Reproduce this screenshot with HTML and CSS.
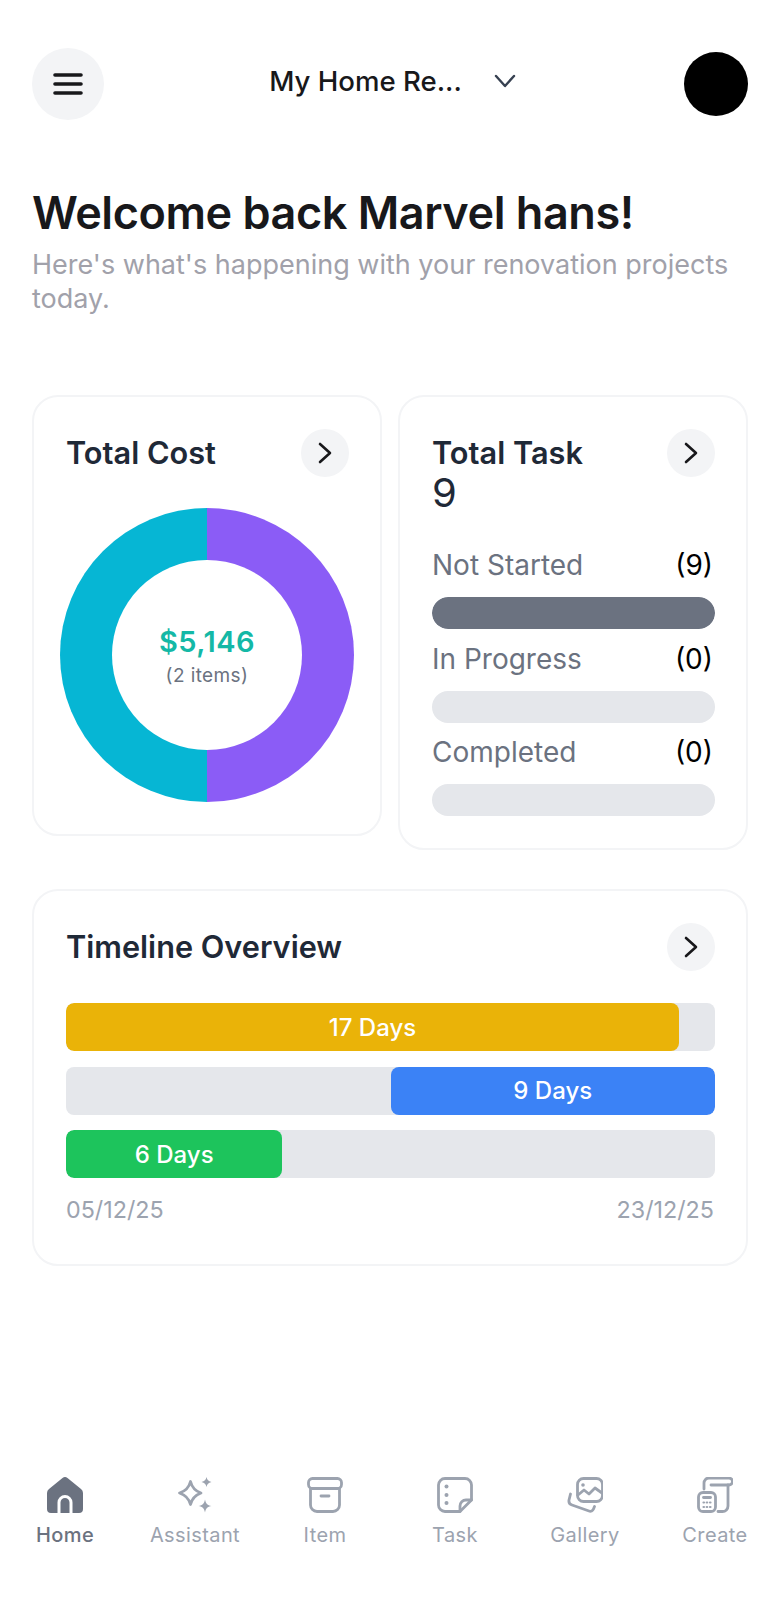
FILE: index.html
```html
<!DOCTYPE html>
<html lang="en">
<head>
    <meta charset="UTF-8">
    <meta name="viewport" content="width=device-width, initial-scale=1.0">
    <title>Home</title>
    <link rel="stylesheet" href="styles.css">
</head>
<body>
    <div class="page">
        <!-- Top bar -->
        <header class="topbar">
            <button class="menu-btn" type="button" aria-label="Menu">
                <svg width="30" height="30" viewBox="0 0 30 30" fill="none" stroke="#18181b" stroke-width="3.600" stroke-linecap="round">
                    <path d="M2 6h26M2 15h26M2 24h26"/>
                </svg>
            </button>
            <div class="project-picker">
                <span class="project-name">My Home Re...</span>
                <svg width="22" height="14" viewBox="0 0 22 14" fill="none" stroke="#374151" stroke-width="2.400" stroke-linecap="round" stroke-linejoin="round">
                    <path d="M2 2l9 10 9-10"/>
                </svg>
            </div>
            <div class="avatar"></div>
        </header>

        <!-- Greeting -->
        <section class="greeting">
            <h1>Welcome back Marvel hans!</h1>
            <p>Here's what's happening with your renovation projects today.</p>
        </section>

        <!-- Summary cards -->
        <section class="summary">
            <div class="card card-cost">
                <div class="card-head">
                    <h2>Total Cost</h2>
                    <button class="arrow-btn" type="button" aria-label="Open">
                        <svg width="16" height="24" viewBox="0 0 16 24" fill="none" stroke="#18181b" stroke-width="2.600" stroke-linecap="round" stroke-linejoin="round"><path d="M3 3l10 9-10 9"/></svg>
                    </button>
                </div>
                <div class="donut">
                    <div class="donut-hole">
                        <span class="donut-value">$5,146</span>
                        <span class="donut-note">(2 items)</span>
                    </div>
                </div>
            </div>

            <div class="card card-task">
                <div class="card-head">
                    <div>
                        <h2>Total Task</h2>
                        <div class="task-total">9</div>
                    </div>
                    <button class="arrow-btn" type="button" aria-label="Open">
                        <svg width="16" height="24" viewBox="0 0 16 24" fill="none" stroke="#18181b" stroke-width="2.600" stroke-linecap="round" stroke-linejoin="round"><path d="M3 3l10 9-10 9"/></svg>
                    </button>
                </div>
                <div class="status-list">
                    <div class="status-row"><span>Not Started</span><span class="status-count">(9)</span></div>
                    <div class="status-bar"><div class="status-fill" style="width:100%"></div></div>
                    <div class="status-row"><span>In Progress</span><span class="status-count">(0)</span></div>
                    <div class="status-bar"><div class="status-fill" style="width:0%"></div></div>
                    <div class="status-row"><span>Completed</span><span class="status-count">(0)</span></div>
                    <div class="status-bar"><div class="status-fill" style="width:0%"></div></div>
                </div>
            </div>
        </section>

        <!-- Timeline -->
        <section class="card timeline">
            <div class="card-head">
                <h2>Timeline Overview</h2>
                <button class="arrow-btn" type="button" aria-label="Open">
                    <svg width="16" height="24" viewBox="0 0 16 24" fill="none" stroke="#18181b" stroke-width="2.600" stroke-linecap="round" stroke-linejoin="round"><path d="M3 3l10 9-10 9"/></svg>
                </button>
            </div>
            <div class="tracks">
                <div class="track"><div class="track-fill fill-yellow" style="width:94.44%">17 Days</div></div>
                <div class="track track-end"><div class="track-fill fill-blue" style="width:50%">9 Days</div></div>
                <div class="track"><div class="track-fill fill-green" style="width:33.33%">6 Days</div></div>
            </div>
            <div class="dates">
                <span>05/12/25</span>
                <span>23/12/25</span>
            </div>
        </section>

        <!-- Bottom navigation -->
        <nav class="tabbar">
            <a class="tab tab-active">
                <svg width="36" height="36" viewBox="0 0 36 36">
                    <path fill="#6b7280" d="M15.500 1a4 4 0 0 1 5 0l13.500 11a5 5 0 0 1 2 4v16a4 4 0 0 1-4 4H4a4 4 0 0 1-4-4V16a5 5 0 0 1 2-4z"/>
                    <path fill="none" stroke="#fff" stroke-width="3" d="M12 36V25.500a6 6 0 0 1 12 0V36"/>
                </svg>
                <span>Home</span>
            </a>
            <a class="tab">
                <svg width="36" height="36" viewBox="0 0 36 36" fill="none">
                    <path stroke="#9ca3af" stroke-width="2.800" stroke-linejoin="round" d="M13.500 4.500c1.500 6 4.500 9.500 10.500 11.500-6 2.200-9 5.500-10.500 11.500-1.500-6-4.500-9.300-11-11.500 6.500-2 9.500-5.500 11-11.500z"/>
                    <path fill="#9ca3af" d="M29.500 0c.7 3 1.800 4.300 5 5-3.200.8-4.300 2-5 5-.7-3-1.800-4.200-5-5 3.200-.7 4.300-2 5-5zM28 22.500c.9 4.300 2.300 5.700 6.500 6.500-4.200.9-5.600 2.300-6.500 6.500-.9-4.200-2.300-5.600-6.500-6.500 4.200-.8 5.600-2.200 6.500-6.500z"/>
                </svg>
                <span>Assistant</span>
            </a>
            <a class="tab">
                <svg width="36" height="36" viewBox="0 0 36 36" fill="none" stroke="#9ca3af" stroke-width="2.800" stroke-linecap="round" stroke-linejoin="round">
                    <rect x="1.500" y="1.500" width="33" height="10" rx="4"/>
                    <path d="M3.500 11.500V28a6.500 6.500 0 0 0 6.500 6.500h16a6.500 6.500 0 0 0 6.500-6.500V11.500M14 19h8"/>
                </svg>
                <span>Item</span>
            </a>
            <a class="tab">
                <svg width="36" height="36" viewBox="0 0 36 36" fill="none" stroke="#9ca3af" stroke-width="2.800" stroke-linecap="round" stroke-linejoin="round">
                    <path d="M23 34.500H8A6.500 6.500 0 0 1 1.500 28V8A6.500 6.500 0 0 1 8 1.500h20A6.500 6.500 0 0 1 34.500 8v15z"/>
                    <path d="M23 34.500V29a6 6 0 0 1 6-6h5.500"/>
                    <circle cx="9.500" cy="9.500" r="2" fill="#9ca3af" stroke="none"/>
                    <circle cx="9.500" cy="18" r="2" fill="#9ca3af" stroke="none"/>
                    <circle cx="9.500" cy="26" r="2" fill="#9ca3af" stroke="none"/>
                </svg>
                <span>Task</span>
            </a>
            <a class="tab">
                <svg width="36" height="36" viewBox="0 0 36 36" fill="none" stroke="#9ca3af" stroke-width="2.800" stroke-linecap="round" stroke-linejoin="round">
                    <rect x="10.500" y="1.500" width="25" height="23" rx="6"/>
                    <path d="M11 18l6-5 5 4 6-6 7 5"/>
                    <circle cx="16" cy="8" r="1.800" fill="#9ca3af" stroke="none"/>
                    <path d="M3.500 17l-1.500 6a4.500 4.500 0 0 0 3 5l17 6a3.500 3.500 0 0 0 4.500-2l1-2.500"/>
                </svg>
                <span>Gallery</span>
            </a>
            <a class="tab">
                <svg width="36" height="36" viewBox="0 0 36 36" fill="none" stroke="#9ca3af" stroke-width="2.800" stroke-linecap="round" stroke-linejoin="round">
                    <path d="M7 12V6a5 5 0 0 1 5-5h20a3.500 3.500 0 0 1 0 7H14"/>
                    <path d="M31 8v21a5.500 5.500 0 0 1-5.500 5.500H21"/>
                    <rect x="1.500" y="15.500" width="17" height="19" rx="4.500"/>
                    <path d="M6.500 20.500h7"/>
                    <path d="M6.500 25.500h.5M9.700 25.500h.5M13 25.500h.5M6.500 30h.5M9.700 30h.5M13 30h.5" stroke-width="2.200"/>
                </svg>
                <span>Create</span>
            </a>
        </nav>
    </div>
</body>
</html>
```

FILE: styles.css
```css
* {
    box-sizing: border-box;
}

html, body {
    margin: 0;
    padding: 0;
    background: #fff;
}

body {
    font-family: Inter, "Liberation Sans", sans-serif;
    color: #18181b;
}

.page {
    display: flex;
    flex-direction: column;
    width: 780px;
    height: 1600px;
    padding-top: 48px;
}

button {
    border: none;
    padding: 0;
    cursor: pointer;
}

/* Top bar */
.topbar {
    display: flex;
    align-items: center;
    justify-content: space-between;
    padding: 0 32px;
    height: 72px;
}

.menu-btn {
    display: flex;
    align-items: center;
    justify-content: center;
    width: 72px;
    height: 72px;
    border-radius: 50%;
    background: #f3f4f6;
}

.project-picker {
    display: flex;
    align-items: center;
    gap: 32px;
    padding: 0 3px 6px 0;
}

.project-name {
    font-size: 27.600px;
    font-weight: 500;
}

.avatar {
    width: 64px;
    height: 64px;
    border-radius: 50%;
    background: #000;
}

/* Greeting */
.greeting {
    padding: 0 32px;
    margin-top: 65px;
}

.greeting h1 {
    margin: 0 0 7px;
    font-size: 45px;
    line-height: 56px;
    font-weight: 600;
    letter-spacing: -0.45px;
}

.greeting p {
    margin: 0;
    font-size: 27px;
    line-height: 33.500px;
    color: #a1a1aa;
}

/* Cards */
.summary {
    display: flex;
    align-items: flex-start;
    gap: 16px;
    padding: 0 32px;
    margin-top: 80px;
}

.card {
    flex: 1 1 0;
    min-width: 0;
    background: #fff;
    border: 2px solid #f3f4f6;
    border-radius: 26px;
    padding: 32px 31px 32px 32px;
}

.card-head {
    display: flex;
    align-items: flex-start;
    justify-content: space-between;
}

.card h2 {
    margin: 0;
    font-size: 30.700px;
    line-height: 48px;
    font-weight: 600;
    color: #1f2937;
}

.arrow-btn {
    display: flex;
    align-items: center;
    justify-content: center;
    flex: none;
    width: 48px;
    height: 48px;
    border-radius: 50%;
    background: #f3f4f6;
}

/* Donut */
.card-cost {
    height: 441px;
}

.donut {
    display: flex;
    align-items: center;
    justify-content: center;
    width: 294px;
    height: 294px;
    margin: 31px 0 0 -6px;
    border-radius: 50%;
    background: conic-gradient(#8b5cf6 0 50%, #06b6d4 50% 100%);
}

.donut-hole {
    display: flex;
    flex-direction: column;
    align-items: center;
    justify-content: center;
    width: 190px;
    height: 190px;
    padding-top: 6px;
    border-radius: 50%;
    background: #fff;
}

.donut-value {
    font-size: 29px;
    line-height: 36px;
    font-weight: 600;
    letter-spacing: 0.5px;
    color: #14b8a6;
}

.donut-note {
    font-size: 19px;
    line-height: 32px;
    letter-spacing: 0.4px;
    color: #6b7280;
}

/* Task status */
.task-total {
    margin-top: -6px;
    font-size: 40px;
    line-height: 44px;
    color: #1f2937;
}

.status-list {
    margin-top: 33px;
}

.status-row {
    display: flex;
    justify-content: space-between;
    padding-right: 2px;
    font-size: 28px;
    line-height: 34px;
    color: #6b7280;
}

.status-count {
    color: #000;
}

.status-bar {
    height: 32px;
    margin: 15px 0 12.500px;
    border-radius: 16px;
    background: #e5e7eb;
    overflow: hidden;
}

.status-bar:last-child {
    margin-bottom: 0;
}

.status-fill {
    height: 100%;
    border-radius: 16px;
    background: #6b7280;
}

/* Timeline */
.timeline {
    flex: none;
    margin: 39px 32px 0;
    height: 377px;
}

.tracks {
    display: flex;
    flex-direction: column;
    gap: 15.500px;
    margin-top: 32px;
}

.track {
    display: flex;
    height: 48px;
    border-radius: 8px;
    background: #e5e7eb;
    overflow: hidden;
}

.track-end {
    justify-content: flex-end;
}

.track-fill {
    display: flex;
    align-items: center;
    justify-content: center;
    border-radius: 8px;
    font-size: 24px;
    font-weight: 500;
    color: #fff;
}

.fill-yellow {
    background: #eab308;
}

.fill-blue {
    background: #3b82f6;
}

.fill-green {
    background: #1dc45c;
}

.dates {
    display: flex;
    justify-content: space-between;
    margin-top: 17px;
    padding-right: 1px;
    font-size: 23.300px;
    line-height: 30px;
    color: #9ca3af;
}

/* Bottom navigation */
.tabbar {
    display: grid;
    grid-template-columns: repeat(6, 130px);
    margin-top: 211px;
}

.tab {
    display: flex;
    flex-direction: column;
    align-items: center;
    gap: 9px;
    font-size: 20px;
    line-height: 26px;
    letter-spacing: 0.4px;
    color: #9ca3af;
}

.tab-active {
    font-weight: 500;
    color: #6b7280;
}
```
